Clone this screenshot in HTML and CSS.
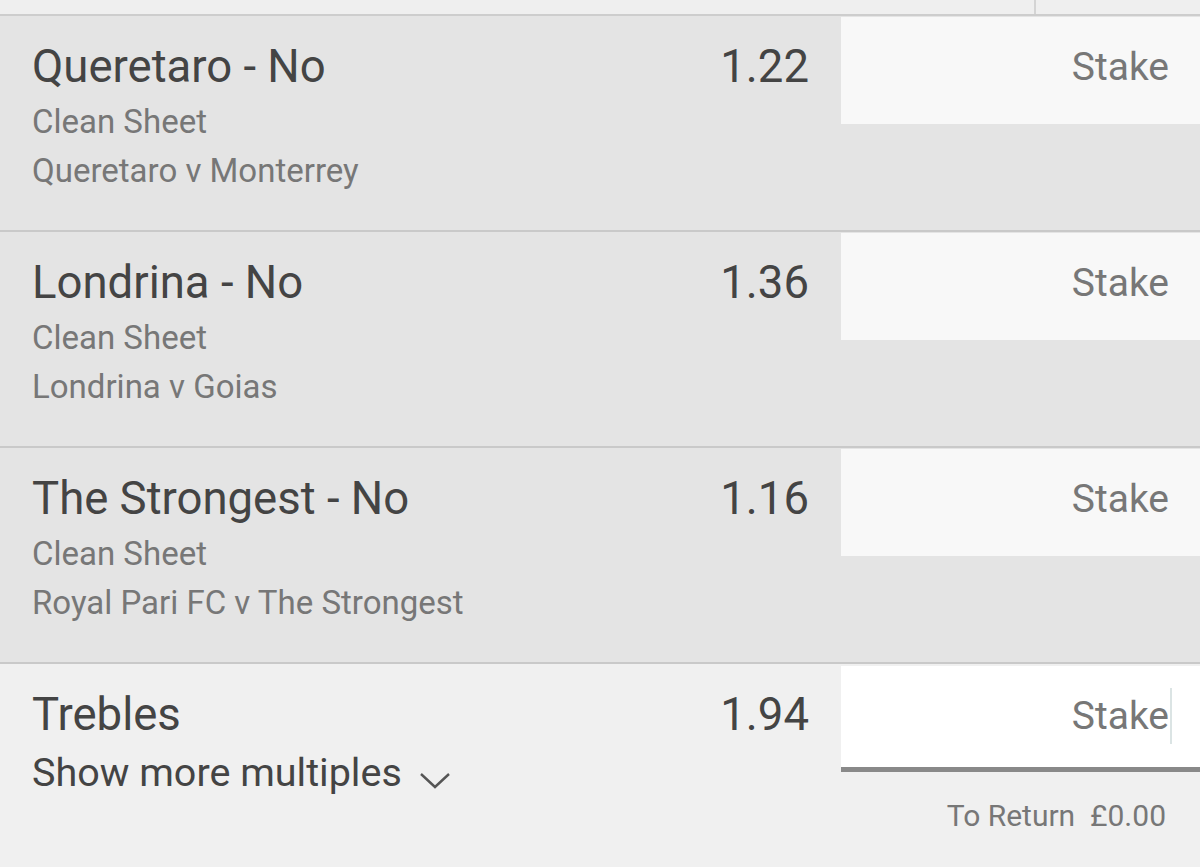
FILE: index.html
```html
<!DOCTYPE html>
<html lang="en">
	<head>
		<meta charset="UTF-8" />
		<meta name="viewport" content="width=device-width, initial-scale=1.0" />
		<title>Bet Slip</title>
		<link rel="stylesheet" href="styles.css">
	</head>
	<body>
		<div class="toolbar">
			<div class="toolbar-main"></div>
			<div class="toolbar-side"></div>
		</div>

		<div class="selection">
			<div class="info">
				<div class="headline">
					<span class="name">Queretaro - No</span>
					<span class="odds">1.22</span>
				</div>
				<div class="market">Clean Sheet</div>
				<div class="event">Queretaro v Monterrey</div>
			</div>
			<div class="stake">Stake</div>
		</div>

		<div class="selection">
			<div class="info">
				<div class="headline">
					<span class="name">Londrina - No</span>
					<span class="odds">1.36</span>
				</div>
				<div class="market">Clean Sheet</div>
				<div class="event">Londrina v Goias</div>
			</div>
			<div class="stake">Stake</div>
		</div>

		<div class="selection">
			<div class="info">
				<div class="headline">
					<span class="name">The Strongest - No</span>
					<span class="odds">1.16</span>
				</div>
				<div class="market">Clean Sheet</div>
				<div class="event">Royal Pari FC v The Strongest</div>
			</div>
			<div class="stake">Stake</div>
		</div>

		<div class="multiple">
			<div class="info">
				<div class="headline">
					<span class="name">Trebles</span>
					<span class="odds">1.94</span>
				</div>
				<div class="more">
					Show more multiples
					<svg class="chevron" width="32" height="18" viewBox="0 0 32 18">
						<path d="M2 3 L16 16 L30 3" fill="none" stroke="#555" stroke-width="2.4" />
					</svg>
				</div>
			</div>
			<div class="stake-col">
				<div class="stake active">Stake<span class="caret"></span></div>
				<div class="returns">To Return&nbsp; £0.00</div>
			</div>
		</div>
	</body>
</html>
```

FILE: styles.css
```css
body {
	margin: 0;
	font-family: Roboto, 'Noto Sans', sans-serif;
	background-color: #f0f0f0;
	color: #444;
	overflow: hidden;
}
.toolbar {
	display: flex;
	height: 14px;
	background-color: #efefef;
	border-bottom: 2px solid #cdcdcd;
}
.toolbar-main {
	width: 1034px;
	border-right: 2px solid #d4d4d4;
}
.toolbar-side {
	flex: 1;
}
.selection {
	display: flex;
	height: 214px;
	background-color: #e4e4e4;
	border-bottom: 2px solid #c9c9c9;
}
.multiple {
	display: flex;
	background-color: #f0f0f0;
	height: 210px;
}
.info {
	flex: 1;
	padding: 23px 32px 0;
}
.headline {
	display: flex;
	justify-content: space-between;
	font-size: 45.5px;
	line-height: 56px;
	color: #444;
}
.market,
.event {
	font-size: 33px;
	line-height: 49px;
	color: #777;
}
.market {
	margin-top: 2px;
}
.more {
	display: flex;
	align-items: center;
	gap: 17px;
	font-size: 39.5px;
	line-height: 60px;
	color: #444;
}
.chevron {
	margin-top: 14px;
}
.stake {
	position: relative;
	width: 359px;
	height: 107px;
	margin-top: 1px;
	box-sizing: border-box;
	padding-right: 31px;
	background-color: #f8f8f8;
	font-size: 39px;
	line-height: 101px;
	text-align: right;
	color: #777;
}
.stake-col {
	width: 359px;
	margin-top: 2px;
}
.stake.active {
	margin-top: 0;
	height: 106px;
	line-height: 100px;
	background-color: #fff;
	border-bottom: 5px solid #898989;
	padding-right: 31px;
}
.caret {
	position: absolute;
	right: 28px;
	top: 22px;
	width: 2px;
	height: 56px;
	background-color: #dbe4e4;
}
.returns {
	padding: 24px 34px 0 0;
	font-size: 30px;
	line-height: 40px;
	text-align: right;
	color: #777;
}
```
